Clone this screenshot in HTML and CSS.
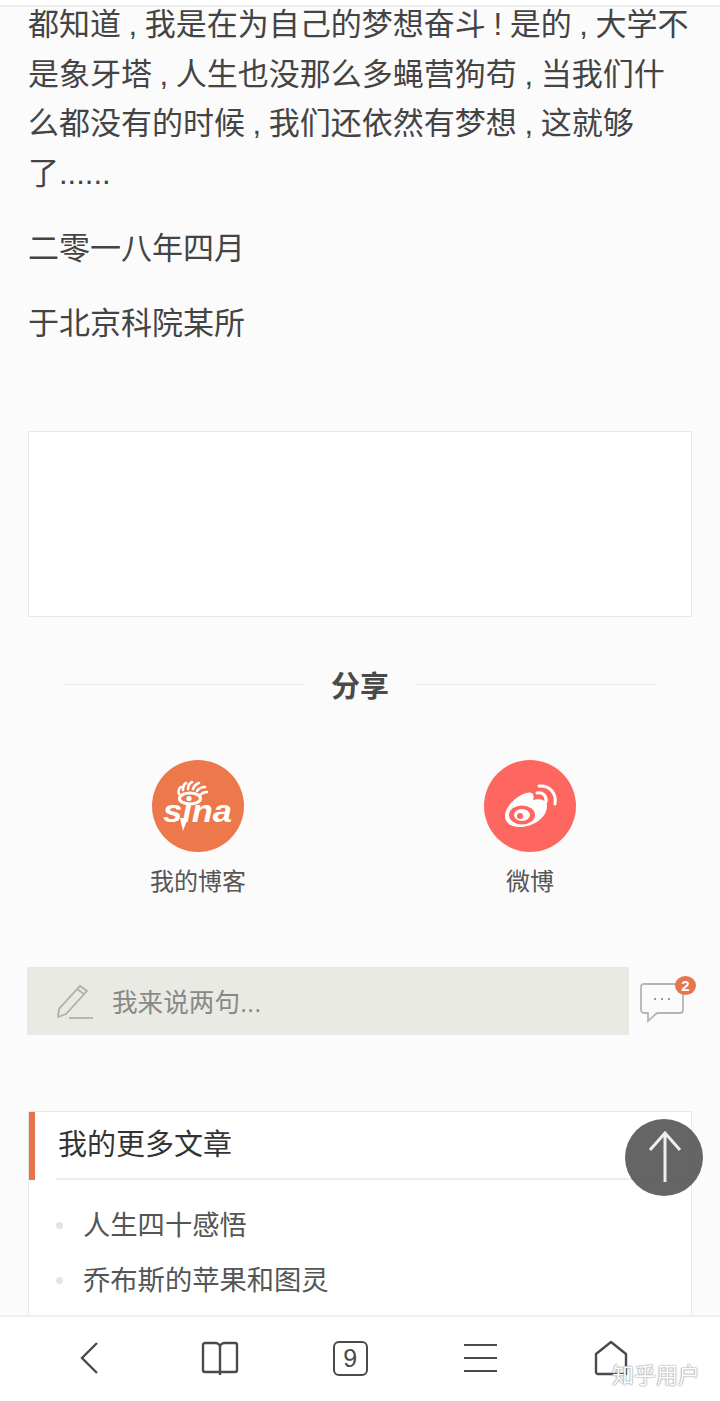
FILE: index.html
```html
<!DOCTYPE html>
<html lang="zh-CN">
<head>
  <meta charset="UTF-8" />
  <meta name="viewport" content="width=device-width, initial-scale=1.0" />
  <title>我的博客</title>
  <link rel="stylesheet" href="styles.css">
</head>
<body>

  <div class="topbar"></div>

  <div class="article">
    <p>都知道 , 我是在为自己的梦想奋斗 ! 是的 , 大学不是象牙塔 , 人生也没那么多蝇营狗苟 , 当我们什么都没有的时候 , 我们还依然有梦想 , 这就够了......</p>
    <p>二零一八年四月</p>
    <p>于北京科院某所</p>
  </div>

  <div class="blank-box"></div>

  <div class="share-title">
    <span class="dotline"></span>
    <b>分享</b>
    <span class="dotline"></span>
  </div>

  <div class="share-list">
    <div class="share-item">
      <svg class="share-icon" viewBox="0 0 92 92">
        <circle cx="46" cy="46" r="46" fill="#ec784c"/>
        <g fill="none" stroke="#fff">
          <ellipse cx="38" cy="38.5" rx="10.5" ry="5.5" stroke-width="3"/>
          <path d="M27 34c-1-3 0-6 2-7M31 30c0-3 1-6 3-7M36 29c0-3 2-6 4-7M41 29c1-3 3-5 6-6M45 31c2-3 4-4 8-4M48 35c2-2 4-3 7-3" stroke-width="2.6" stroke-linecap="round"/>
        </g>
        <circle cx="37" cy="38.5" r="2.6" fill="#fff"/>
        <text class="sina-text" x="11" y="62" textLength="69" lengthAdjust="spacingAndGlyphs">sına</text>
        <path d="M28 58l8 0-5 13z" fill="#fff"/>
      </svg>
      <span class="share-name">我的博客</span>
    </div>
    <div class="share-item">
      <svg class="share-icon weibo" viewBox="0 0 92 92">
        <circle cx="46" cy="46" r="46" fill="#fe6760"/>
        <path d="M21 56c0-9 11-20 21-23 6-2 9 1 7 7 7-2 14 0 14 6 0 11-13 21-27 21-9 0-15-4-15-11z" fill="#fff"/>
        <ellipse cx="38" cy="55" rx="13" ry="9.5" fill="#fe6760"/>
        <ellipse cx="38" cy="55" rx="8" ry="6" fill="#fff"/>
        <circle cx="36" cy="56" r="3" fill="#fe6760"/>
        <path d="M53 33c6-1 10 3 9 9" fill="none" stroke="#fff" stroke-width="3" stroke-linecap="round"/>
        <path d="M55 26c10-1 18 7 16 18" fill="none" stroke="#fff" stroke-width="3" stroke-linecap="round"/>
      </svg>
      <span class="share-name">微博</span>
    </div>
  </div>

  <div class="comment-row">
    <div class="comment-input">
      <svg class="pen" viewBox="0 0 38 36" fill="none" stroke="#b0b0ac" stroke-width="1.8">
        <path d="M2 33l1-8L24 2l7 5L10 30z"/>
        <path d="M21 5l7 5"/>
        <path d="M13 34h24"/>
      </svg>
      <span class="placeholder">我来说两句...</span>
    </div>
    <div class="comment-btn">
      <svg viewBox="0 0 46 42" fill="none" stroke="#b5b5b5" stroke-width="1.8">
        <path d="M5 3h36a3 3 0 0 1 3 3v23a3 3 0 0 1-3 3H18l-9 8v-8H5a3 3 0 0 1-3-3V6a3 3 0 0 1 3-3z"/>
        <path d="M15 18h2M22 18h2M29 18h2" stroke="#999" stroke-width="2"/>
      </svg>
      <span class="badge">2</span>
    </div>
  </div>

  <div class="more-card">
    <h3 class="more-title">我的更多文章</h3>
    <ul class="more-list">
      <li>人生四十感悟</li>
      <li>乔布斯的苹果和图灵</li>
    </ul>
  </div>

  <div class="to-top">
    <svg viewBox="0 0 78 77" fill="none" stroke="#eee" stroke-width="3">
      <path d="M40 63V14M25 31L40 14l15 17"/>
    </svg>
  </div>

  <div class="bottom-nav">
    <div class="nav-item">
      <svg width="20" height="34" viewBox="0 0 20 34" fill="none" stroke="#4a4a4a" stroke-width="2.4">
        <path d="M18 2L3 17l15 15"/>
      </svg>
    </div>
    <div class="nav-item">
      <svg width="38" height="35" viewBox="0 0 38 35" fill="none" stroke="#4a4a4a" stroke-width="2.4" stroke-linejoin="round">
        <path d="M19 6c0-2-2-4-4-4H4a2 2 0 0 0-2 2v25a2 2 0 0 0 2 2h15M19 6c0-2 2-4 4-4h11a2 2 0 0 1 2 2v25a2 2 0 0 1-2 2H19M19 6v28"/>
      </svg>
    </div>
    <div class="nav-item">
      <span class="tab-count">9</span>
    </div>
    <div class="nav-item">
      <div class="menu-icon"><i></i><i></i><i></i></div>
    </div>
    <div class="nav-item">
      <svg width="34" height="36" viewBox="0 0 34 36" fill="none" stroke="#4a4a4a" stroke-width="2.4" stroke-linejoin="round">
        <path d="M2 14L17 2l15 12v20H4a2 2 0 0 1-2-2z"/>
      </svg>
    </div>
  </div>

  <div class="watermark">知乎用户</div>

</body>
</html>
```

FILE: styles.css
```css
html, body {
  margin: 0;
  padding: 0;
}
body {
  position: relative;
  width: 720px;
  height: 1401px;
  overflow: hidden;
  background: #fbfbfb;
  color: #444;
  font-family: "Liberation Sans", "Noto Sans CJK SC", sans-serif;
}
.topbar {
  position: absolute;
  top: 0;
  left: 0;
  right: 0;
  height: 5px;
  background: #fff;
  border-bottom: 2px solid #f0f0f0;
}
.article {
  padding: 0 28px;
  font-size: 31px;
  line-height: 49.5px;
  word-spacing: -1px;
}
.article p {
  margin: 0 0 25.5px;
}
.blank-box {
  margin: 83px 28px 0;
  height: 184px;
  background: #fff;
  border: 1px solid #e8e8e8;
}
.share-title {
  display: flex;
  align-items: center;
  justify-content: center;
  gap: 28px;
  margin-top: 49px;
  height: 36px;
  font-size: 29px;
  color: #4a4a4a;
}
.dotline {
  width: 239px;
  border-top: 1px dotted #d8d8d8;
}
.share-list {
  display: flex;
  margin-top: 58px;
  padding-left: 132px;
  gap: 200px;
}
.share-item {
  display: flex;
  flex-direction: column;
  align-items: center;
  width: 132px;
}
.share-icon {
  width: 92px;
  height: 92px;
}
.sina-text {
  font-family: "Liberation Sans", sans-serif;
  font-size: 32px;
  font-weight: bold;
  font-style: italic;
  fill: #fff;
}
.share-name {
  margin-top: 14px;
  font-size: 24px;
  line-height: 32px;
  color: #555;
}
.comment-row {
  display: flex;
  align-items: center;
  margin-top: 69px;
  padding-left: 27px;
}
.comment-input {
  display: flex;
  align-items: center;
  width: 602px;
  height: 68px;
  background: #eaeae4;
  color: #888;
  font-size: 25.6px;
}
.placeholder {
  margin-bottom: 2px;
}
.pen {
  width: 38px;
  height: 36px;
  margin: 2px 18px 0 29px;
}
.comment-btn {
  position: relative;
  width: 46px;
  height: 42px;
  margin: 2px 0 0 10px;
}
.comment-btn svg {
  display: block;
  width: 46px;
  height: 42px;
}
.badge {
  position: absolute;
  top: -5px;
  left: 36px;
  width: 21px;
  height: 19px;
  border-radius: 50%;
  background: #e8744c;
  color: #fff;
  font-size: 15px;
  font-weight: bold;
  line-height: 19px;
  text-align: center;
}
.more-card {
  position: relative;
  margin: 76px 28px 0;
  height: 260px;
  background: #fff;
  border: 1px solid #e8e8e8;
  box-sizing: border-box;
}
.more-title {
  margin: 0 0 0 27px;
  height: 66px;
  border-bottom: 2px solid #eee;
  font-size: 29px;
  font-weight: normal;
  line-height: 67px;
  text-indent: 2px;
  color: #333;
}
.more-title::before {
  content: "";
  position: absolute;
  top: 0;
  left: 0;
  width: 6px;
  height: 68px;
  background: #e8744c;
}
.more-list {
  margin: 18px 0 0;
  padding: 0 0 0 54px;
  list-style: none;
  font-size: 27.3px;
  line-height: 55px;
  color: #555;
}
.more-list li {
  position: relative;
}
.more-list li::before {
  content: "";
  position: absolute;
  left: -27px;
  top: 24px;
  width: 7px;
  height: 7px;
  border-radius: 50%;
  background: #e4e4e4;
}
.to-top {
  position: absolute;
  left: 625px;
  top: 1119px;
  width: 78px;
  height: 77px;
  border-radius: 50%;
  background: rgba(80, 80, 80, 0.88);
}
.to-top svg {
  display: block;
  width: 78px;
  height: 77px;
}
.bottom-nav {
  position: absolute;
  left: 0;
  right: 0;
  bottom: 0;
  height: 84px;
  display: grid;
  grid-template-columns: repeat(5, 130.5px);
  padding-left: 24px;
  align-items: center;
  background: #fff;
  border-top: 2px solid #efefef;
}
.nav-item {
  display: flex;
  align-items: center;
  justify-content: center;
  height: 36px;
  margin-bottom: 2px;
}
.tab-count {
  width: 31px;
  height: 31px;
  border: 2.4px solid #4a4a4a;
  border-radius: 6px;
  font-size: 25px;
  line-height: 31px;
  text-align: center;
  color: #4a4a4a;
}
.menu-icon {
  display: flex;
  flex-direction: column;
  gap: 10.6px;
  width: 33px;
}
.menu-icon i {
  display: block;
  height: 2.4px;
  background: #4a4a4a;
}
.watermark {
  position: absolute;
  left: 612px;
  top: 1362px;
  font-size: 22px;
  line-height: 28px;
  color: #fff;
  text-shadow: 0 0 2px #888, 0 0 1px #888;
}
```
